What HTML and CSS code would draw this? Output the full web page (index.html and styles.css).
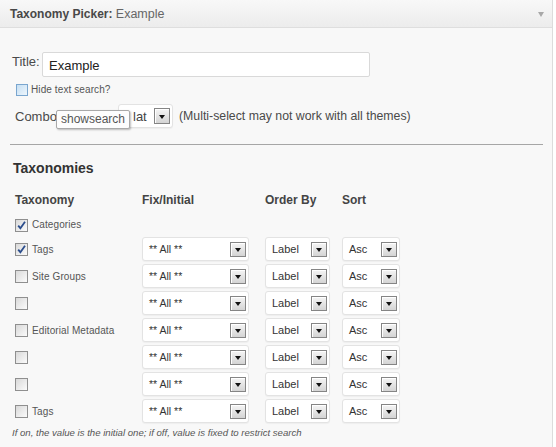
FILE: index.html
```html
<!DOCTYPE html>
<html>
<head>
<meta charset="utf-8">
<link rel="stylesheet" href="styles.css">
</head>
<body>
<div class="panel">
  <div class="head">
    <span class="ht"><b>Taxonomy Picker:</b> <span class="inst">Example</span></span>
    <span class="harrow"></span>
  </div>
  <div class="content">
    <div class="title-row">
      <label class="lbl title-lbl">Title:</label>
      <div class="input">Example</div>
    </div>
    <div class="hide-row">
      <span class="cb cb-hover"></span>
      <span class="small">Hide text search?</span>
    </div>
    <div class="combo-row">
      <span class="lbl combo-lbl">Combo</span>
      <div class="sel sel-combo"><span class="v13">lat</span><span class="btn"><i></i></span></div>
      <span class="hint">(Multi-select may not work with all themes)</span>
      <span class="tooltip">showsearch</span>
    </div>
    <hr class="sep">
    <h3 class="sec">Taxonomies</h3>
    <div class="grid">
      <div class="colh">Taxonomy</div>
      <div class="colh">Fix/Initial</div>
      <div class="colh">Order By</div>
      <div class="colh">Sort</div>

      <div class="tx full"><span class="cb checked"><svg viewBox="0 0 11 11" width="11" height="11"><path d="M2.2 5.6 L4.4 8.2 L9 1.8" fill="none" stroke="#2b4d8c" stroke-width="1.8"/></svg></span><span class="small">Categories</span></div>

      <div class="tx"><span class="cb checked"><svg viewBox="0 0 11 11" width="11" height="11"><path d="M2.2 5.6 L4.4 8.2 L9 1.8" fill="none" stroke="#2b4d8c" stroke-width="1.8"/></svg></span><span class="small">Tags</span></div>
      <div class="sel sel-fix"><span>** All **</span><span class="btn"><i></i></span></div>
      <div class="sel sel-ord"><span>Label</span><span class="btn"><i></i></span></div>
      <div class="sel sel-sort"><span>Asc</span><span class="btn"><i></i></span></div>

      <div class="tx"><span class="cb"></span><span class="small">Site Groups</span></div>
      <div class="sel sel-fix"><span>** All **</span><span class="btn"><i></i></span></div>
      <div class="sel sel-ord"><span>Label</span><span class="btn"><i></i></span></div>
      <div class="sel sel-sort"><span>Asc</span><span class="btn"><i></i></span></div>

      <div class="tx"><span class="cb"></span></div>
      <div class="sel sel-fix"><span>** All **</span><span class="btn"><i></i></span></div>
      <div class="sel sel-ord"><span>Label</span><span class="btn"><i></i></span></div>
      <div class="sel sel-sort"><span>Asc</span><span class="btn"><i></i></span></div>

      <div class="tx"><span class="cb"></span><span class="small">Editorial Metadata</span></div>
      <div class="sel sel-fix"><span>** All **</span><span class="btn"><i></i></span></div>
      <div class="sel sel-ord"><span>Label</span><span class="btn"><i></i></span></div>
      <div class="sel sel-sort"><span>Asc</span><span class="btn"><i></i></span></div>

      <div class="tx"><span class="cb"></span></div>
      <div class="sel sel-fix"><span>** All **</span><span class="btn"><i></i></span></div>
      <div class="sel sel-ord"><span>Label</span><span class="btn"><i></i></span></div>
      <div class="sel sel-sort"><span>Asc</span><span class="btn"><i></i></span></div>

      <div class="tx"><span class="cb"></span></div>
      <div class="sel sel-fix"><span>** All **</span><span class="btn"><i></i></span></div>
      <div class="sel sel-ord"><span>Label</span><span class="btn"><i></i></span></div>
      <div class="sel sel-sort"><span>Asc</span><span class="btn"><i></i></span></div>

      <div class="tx"><span class="cb"></span><span class="small">Tags</span></div>
      <div class="sel sel-fix"><span>** All **</span><span class="btn"><i></i></span></div>
      <div class="sel sel-ord"><span>Label</span><span class="btn"><i></i></span></div>
      <div class="sel sel-sort"><span>Asc</span><span class="btn"><i></i></span></div>
    </div>
    <p class="note">If on, the value is the initial one; if off, value is fixed to restrict search</p>
  </div>
</div>
</body>
</html>
```
FILE: styles.css
```css
html, body {
  margin: 0;
  padding: 0;
  background: #ffffff;
  font-family: "Liberation Sans", Arial, sans-serif;
  color: #333;
}

.panel {
  width: 552px;
  height: 447px;
  border-right: 1px solid #dcdcdc;
  background: #f8f8f8;
}

.head {
  height: 27px;
  border-bottom: 1px solid #dedede;
  background: linear-gradient(#f8f8f8, #ececec);
  display: flex;
  align-items: center;
  justify-content: space-between;
  padding: 0 8px 0 10px;
}

.ht {
  font-size: 12px;
  line-height: 14px;
  color: #464646;
  white-space: nowrap;
}

.ht b {
  font-weight: bold;
  color: #484848;
}

.ht .inst {
  color: #666;
  font-size: 12.5px;
}

.harrow {
  width: 0;
  height: 0;
  border-left: 3px solid transparent;
  border-right: 3px solid transparent;
  border-top: 5px solid #a8a8a8;
  margin-top: 1px;
}

.content {
  padding: 24px 9px 0 11px;
}

.lbl {
  font-size: 13px;
  color: #4a4a4a;
}

.title-row {
  display: flex;
  align-items: flex-start;
  height: 25px;
}

.title-lbl {
  width: 30px;
  margin-left: 1px;
  padding-top: 2px;
  line-height: 15px;
}

.input {
  width: 328px;
  height: 25px;
  box-sizing: border-box;
  border: 1px solid #d9d9d9;
  border-radius: 2px;
  background: #fff;
  font-size: 13px;
  line-height: 23px;
  padding-left: 6px;
  color: #222;
  padding-top: 1px;
}

.hide-row {
  display: flex;
  align-items: center;
  gap: 3px;
  margin: 7px 0 0 5px;
  height: 12px;
}

.small {
  font-size: 10px;
  line-height: 12px;
  color: #555;
  letter-spacing: 0.1px;
}

.cb {
  width: 13px;
  height: 13px;
  box-sizing: border-box;
  border: 1px solid #8f8f8f;
  background: linear-gradient(135deg, #d9d9d9, #fbfbfb);
  display: flex;
  align-items: center;
  justify-content: center;
  flex: none;
}

.cb-hover {
  width: 12px;
  height: 12px;
  border-color: #7aa6cf;
  background: linear-gradient(135deg, #c6dff3, #eef6fc);
}

.combo-row {
  position: relative;
  display: flex;
  align-items: center;
  height: 24px;
  margin: 8px 0 0 4px;
}

.combo-lbl {
  width: 103px;
  white-space: nowrap;
  flex: none;
}

.sel {
  height: 24px;
  box-sizing: border-box;
  border: 1px solid #e3e3e3;
  border-radius: 3px;
  background: #fff;
  box-shadow: 0 1px 1px rgba(0, 0, 0, 0.04);
  display: flex;
  align-items: center;
  justify-content: space-between;
  padding: 0 2px 0 6px;
  font-size: 11px;
  color: #333;
  flex: none;
}

.sel .v13 {
  font-size: 13px;
  color: #444;
  padding-left: 8px;
}

.sel-combo { width: 55px; }
.sel-fix { width: 107px; font-size: 10.5px; }
.sel-ord { width: 65px; }
.sel-sort { width: 58px; }

.btn {
  width: 16px;
  height: 15px;
  box-sizing: border-box;
  border: 1px solid #858585;
  background: linear-gradient(#f5f5f5, #d4d4d4);
  box-shadow: inset 1px 1px 0 #fff;
  display: flex;
  align-items: center;
  justify-content: center;
  padding-top: 2px;
}

.btn i {
  width: 0;
  height: 0;
  border-left: 3.5px solid transparent;
  border-right: 3.5px solid transparent;
  border-top: 4px solid #111;
}

.sel-combo .btn {
  height: 16px;
}

.hint {
  margin-left: 6px;
  font-size: 12.3px;
  color: #4a4a4a;
  white-space: nowrap;
}

.tooltip {
  position: absolute;
  left: 41px;
  top: 6px;
  width: 74px;
  height: 19px;
  box-sizing: border-box;
  background: #fdfdfd;
  border: 1px solid #a9a9a9;
  border-radius: 2px;
  box-shadow: 1px 1px 2px rgba(0, 0, 0, 0.25);
  font-size: 12px;
  line-height: 17px;
  padding-left: 4px;
  color: #555;
}

.sep {
  border: 0;
  height: 0;
  border-top: 1px solid #a6a6a6;
  margin: 16px 0 0 -1px;
}

.sec {
  margin: 15px 0 0 2px;
  font-size: 14px;
  line-height: 16px;
  font-weight: bold;
  color: #333;
}

.grid {
  display: grid;
  grid-template-columns: 127px 123px 77px 60px;
  align-items: center;
  row-gap: 3px;
  margin: 16px 0 0 4px;
}

.colh {
  height: 16px;
  line-height: 16px;
  margin-bottom: 4px;
  font-size: 12px;
  font-weight: bold;
  color: #444;
  white-space: nowrap;
}

.tx {
  display: flex;
  align-items: center;
  gap: 4px;
  min-height: 18px;
  padding-top: 1px;
}

.full {
  grid-column: 1 / -1;
}

.note {
  margin: 4px 0 0 1px;
  font-size: 9.6px;
  line-height: 12px;
  font-style: italic;
  color: #555;
}
```
